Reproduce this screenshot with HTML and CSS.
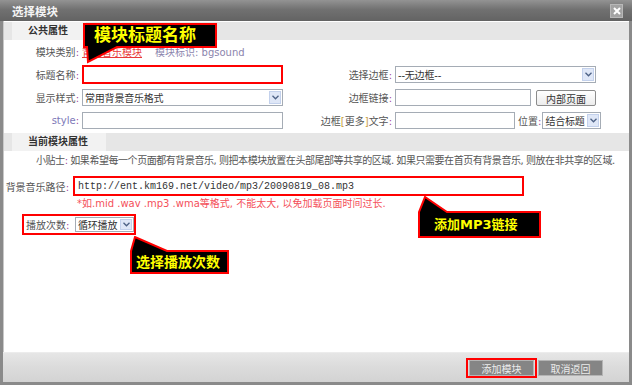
FILE: index.html
```html
<!DOCTYPE html>
<html lang="zh-CN">
<head>
    <meta charset="UTF-8">
    <title>选择模块</title>
    <link rel="stylesheet" href="styles.css">
</head>
<body>
    <div class="dialog">
        <div class="titlebar">
            <span class="title">选择模块</span>
            <span class="close">
                <svg width="8" height="8" viewBox="0 0 8 8"><path d="M1 1 L7 7 M7 1 L1 7" stroke="#fff" stroke-width="2"/></svg>
            </span>
        </div>

        <div class="content">
            <!-- 公共属性 -->
            <div class="sect"><span class="sect-tab">公共属性</span></div>
            <div class="grid">
                <span class="lbl">模块类别<i>:</i></span>
                <div class="field span3">
                    <a class="link" href="#">背景音乐模块</a>
                    <span class="ident">模块标识: bgsound</span>
                </div>

                <span class="lbl">标题名称<i>:</i></span>
                <div class="field"><input class="txt w201 hl" type="text"></div>
                <span class="lbl">选择边框<i>:</i></span>
                <div class="field">
                    <div class="sel w201">--无边框--<span class="arrow"><svg width="7" height="5" viewBox="0 0 7 5"><path d="M0.5 0.8 L3.5 3.8 L6.5 0.8" fill="none" stroke="#4d6185" stroke-width="1.3"/></svg></span></div>
                </div>

                <span class="lbl">显示样式<i>:</i></span>
                <div class="field">
                    <div class="sel w201">常用背景音乐格式<span class="arrow"><svg width="7" height="5" viewBox="0 0 7 5"><path d="M0.5 0.8 L3.5 3.8 L6.5 0.8" fill="none" stroke="#4d6185" stroke-width="1.3"/></svg></span></div>
                </div>
                <span class="lbl">边框链接<i>:</i></span>
                <div class="field">
                    <input class="txt w136" type="text">
                    <button class="btn-inner" type="button">内部页面</button>
                </div>

                <span class="lbl style">style<i>:</i></span>
                <div class="field"><input class="txt w201" type="text"></div>
                <span class="lbl">边框<b>[</b>更多<b>]</b>文字<i>:</i></span>
                <div class="field">
                    <input class="txt w120" type="text">
                    <span class="pos">位置<i>:</i></span>
                    <div class="sel w59">结合标题<span class="arrow"><svg width="7" height="5" viewBox="0 0 7 5"><path d="M0.5 0.8 L3.5 3.8 L6.5 0.8" fill="none" stroke="#4d6185" stroke-width="1.3"/></svg></span></div>
                </div>
            </div>

            <!-- 当前模块属性 -->
            <div class="sect"><span class="sect-tab">当前模块属性</span></div>
            <div class="tips">小贴士<i>:</i> 如果希望每一个页面都有背景音乐, 则把本模块放置在头部尾部等共享的区域. 如果只需要在首页有背景音乐, 则放在非共享的区域.</div>
            <div class="row">
                <span class="lbl2">背景音乐路径<i>:</i></span>
                <input class="txt url hl" type="text" value="http://ent.km169.net/video/mp3/20090819_08.mp3">
            </div>
            <div class="note">*如.mid .wav .mp3 .wma等格式, 不能太大, 以免加载页面时间过长.</div>
            <div class="play">
                <span class="lbl3">播放次数<i>:</i></span>
                <div class="sel small w59">循环播放<span class="arrow"><svg width="7" height="5" viewBox="0 0 7 5"><path d="M0.5 0.8 L3.5 3.8 L6.5 0.8" fill="none" stroke="#4d6185" stroke-width="1.3"/></svg></span></div>
            </div>
        </div>

        <div class="footer">
            <span class="hl-box"><button class="btn" type="button">添加模块</button></span>
            <button class="btn" type="button">取消返回</button>
        </div>

        <!-- callouts -->
        <div class="callout c1">
            <svg width="134" height="41" viewBox="0 0 134 41"><path d="M1 1 H133 V24 H34 L5 39 L4 24 H1 Z" fill="#000" stroke="#f00" stroke-width="2"/></svg>
            <span class="c-text">模块标题名称</span>
        </div>
        <div class="callout c2">
            <svg width="123" height="43" viewBox="0 0 123 43"><path d="M1 16 L7 1 L29 16 H122 V41 H1 Z" fill="#000" stroke="#f00" stroke-width="2"/></svg>
            <span class="c-text">添加MP3链接</span>
        </div>
        <div class="callout c3">
            <svg width="99" height="39" viewBox="0 0 99 39"><path d="M1 15 L5 1 L37 15 H98 V37 H1 Z" fill="#000" stroke="#f00" stroke-width="2"/></svg>
            <span class="c-text">选择播放次数</span>
        </div>
    </div>
</body>
</html>
```

FILE: styles.css
```css
body {
    margin: 0;
    font-family: "DejaVu Sans", "Noto Sans CJK SC", sans-serif;
    font-size: 10px;
    color: #555;
}

.dialog {
    position: relative;
    width: 632px;
    height: 385px;
    box-sizing: border-box;
    padding: 0 3px 3px;
    background: #8a8a8a;
    display: flex;
    flex-direction: column;
}

.titlebar {
    margin: 0 -3px;
    height: 21px;
    display: flex;
    align-items: center;
    padding: 0 9px 0 12px;
    background: linear-gradient(#939393, #717171 45%, #636363);
}

.title {
    color: #f4f4f4;
    font-size: 11.5px;
    font-weight: bold;
}

.close {
    margin-left: auto;
    width: 11px;
    height: 12px;
    background: #a3a3a3;
    border: 1px solid #b8b8b8;
    display: flex;
    align-items: center;
    justify-content: center;
}

.content {
    flex: 1;
    background: #fff;
    border-left: 1px solid #c8c8c8;
}

.sect {
    height: 18px;
    margin-top: 1px;
    background: #e6e6e6;
    display: flex;
}

.sect-tab {
    margin-left: 8px;
    padding: 0 18px 0 16px;
    background: #f2f2f2;
    color: #333;
    font-weight: bold;
    line-height: 18px;
}

.grid {
    display: grid;
    grid-template-columns: 78px 202px 111px 1fr;
    grid-auto-rows: 23px;
    align-items: center;
}

.lbl {
    text-align: right;
    padding-right: 3px;
    white-space: nowrap;
}

.lbl i, .pos i, .tips i, .lbl2 i, .lbl3 i {
    font-style: normal;
    color: #a04aa0;
}

.lbl b {
    font-weight: normal;
    color: #c8a040;
}

.lbl.style {
    color: #7d78b8;
}

.field {
    display: flex;
    align-items: center;
}

.span3 {
    grid-column: 2 / 5;
}

.link {
    color: #e83a3a;
}

.ident {
    margin-left: 13px;
    color: #8b84ad;
}

.txt {
    box-sizing: border-box;
    height: 17px;
    margin: 0;
    padding: 0 3px;
    border: 1px solid #a5acb5;
    background: #fff;
    font-size: 10px;
}

.txt.hl {
    height: 19px;
    border: 2px solid #f00;
}

.w201 { width: 201px; }
.w136 { width: 136px; }
.w120 { width: 120px; }
.w59 { width: 59px; }

.sel {
    box-sizing: border-box;
    height: 17px;
    display: flex;
    align-items: center;
    padding-left: 2px;
    border: 1px solid #a5acb5;
    background: #fff;
    color: #333;
    white-space: nowrap;
    letter-spacing: -0.2px;
}

.sel .arrow {
    margin-left: auto;
    margin-right: 1px;
    width: 12px;
    height: 13px;
    box-sizing: border-box;
    border: 1px solid #c3d1ec;
    background: #dfe7f7;
    display: flex;
    align-items: center;
    justify-content: center;
}

.btn-inner {
    margin-left: 5px;
    width: 60px;
    height: 16px;
    padding: 0;
    border: 1px solid #8c8c8c;
    border-radius: 2px;
    background: linear-gradient(#fff, #ececec);
    color: #333;
    font-family: inherit;
    font-size: 10px;
}

.pos {
    margin: 0 1px 0 3px;
}

.tips {
    height: 20px;
    line-height: 20px;
    padding-left: 32px;
    white-space: nowrap;
    letter-spacing: -0.45px;
}

.row {
    display: flex;
    align-items: center;
    margin-top: 5px;
}

.lbl2 {
    width: 65px;
    padding-right: 2px;
    text-align: right;
    white-space: nowrap;
}

.txt.url {
    margin-left: 2px;
    width: 451px;
    height: 20px;
    color: #333;
    font-family: "Liberation Mono", monospace;
}

.note {
    margin-top: 1px;
    height: 13px;
    line-height: 13px;
    padding-left: 73px;
    color: #f4505a;
    white-space: nowrap;
}

.play {
    margin: 4px 0 0 18px;
    width: 114px;
    height: 21px;
    box-sizing: border-box;
    border: 2px solid #f00;
    display: flex;
    align-items: center;
    padding-left: 2px;
}

.lbl3 {
    width: 46px;
    white-space: nowrap;
}

.sel.small {
    margin-left: 3px;
    height: 15px;
}

.sel.small .arrow {
    height: 11px;
}

.footer {
    height: 30px;
    box-sizing: border-box;
    border-top: 1px solid #ececec;
    background: linear-gradient(#e6e6e6, #dcdcdc 45%, #d3d3d3);
    display: flex;
    align-items: center;
    justify-content: flex-end;
    padding-right: 26px;
}

.hl-box {
    border: 2px solid #f00;
    padding: 0 1px;
    margin-right: 1px;
    display: flex;
}

.btn {
    width: 65px;
    height: 16px;
    padding: 0;
    border: 1px solid #b4b4b4;
    background: #858585;
    color: #ececec;
    font-family: inherit;
    font-size: 10px;
}

.callout {
    position: absolute;
}

.callout svg {
    display: block;
}

.c-text {
    position: absolute;
    left: 0;
    color: #ff0;
    font-weight: bold;
    white-space: nowrap;
}

.c1 { left: 83px; top: 23px; }
.c1 .c-text {
    top: 0;
    height: 25px;
    line-height: 25px;
    padding-left: 11px;
    font-size: 17px;
}

.c2 { left: 418px; top: 196px; }
.c2 .c-text {
    top: 16px;
    height: 25px;
    line-height: 25px;
    padding-left: 16px;
    font-size: 13px;
}

.c3 { left: 130px; top: 236px; }
.c3 .c-text {
    top: 15px;
    height: 22px;
    line-height: 22px;
    padding-left: 6px;
    font-size: 14px;
}
```
